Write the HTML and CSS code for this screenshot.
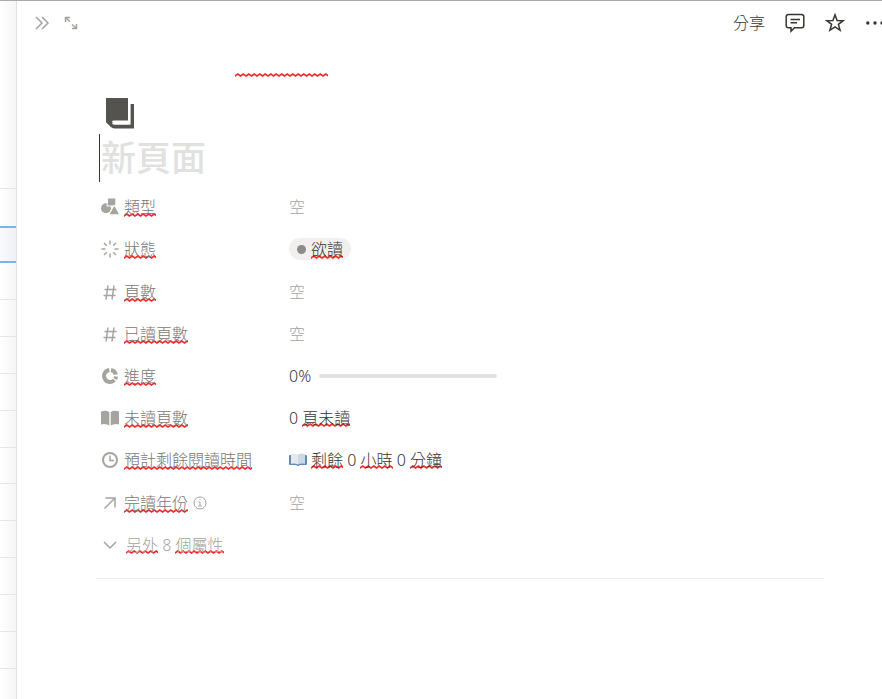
FILE: index.html
```html
<!DOCTYPE html>
<html lang="zh-Hant">
<head>
    <meta charset="UTF-8">
    <meta name="viewport" content="width=device-width, initial-scale=1.0">
    <title>新頁面</title>
    <link rel="stylesheet" href="styles.css">
</head>
<body>
    <!-- Table behind the panel -->
    <div class="backdrop">
        <div class="backdrop-head"></div>
        <div class="backdrop-row selected"></div>
        <div class="backdrop-row"></div>
        <div class="backdrop-row"></div>
        <div class="backdrop-row"></div>
        <div class="backdrop-row"></div>
        <div class="backdrop-row"></div>
        <div class="backdrop-row"></div>
        <div class="backdrop-row"></div>
        <div class="backdrop-row"></div>
        <div class="backdrop-row"></div>
        <div class="backdrop-row"></div>
        <div class="backdrop-row"></div>
    </div>

    <!-- Side panel -->
    <main class="panel">
        <header class="topbar">
            <button class="icon-button muted" aria-label="關閉">
                <svg width="16" height="16" viewBox="0 0 16 16"><path d="M2 2l6 6-6 6M8 2l6 6-6 6"/></svg>
            </button>
            <button class="icon-button muted" aria-label="展開">
                <svg width="14" height="14" viewBox="0 0 14 14"><path d="M1.500 6V1.500H6M1.500 1.500l4.500 4M8 12.500h4.500V8M12.500 12.500L8 8.500"/></svg>
            </button>
            <div class="actions">
                <button class="share">分享</button>
                <button class="icon-button" aria-label="留言">
                    <svg width="20" height="20" viewBox="0 0 20 20"><path d="M3.500 1.500h13a2.300 2.300 0 0 1 2.300 2.300v8.700a2.300 2.300 0 0 1-2.300 2.300H9.500L6 18.200v-3.400H3.500a2.300 2.300 0 0 1-2.300-2.300V3.800a2.300 2.300 0 0 1 2.300-2.300zM5.500 6.500h9.500M5.500 9.800h6.500"/></svg>
                </button>
                <button class="icon-button" aria-label="加到最愛">
                    <svg width="20" height="20" viewBox="0 0 20 20"><path d="M10 1.800l2.100 5.700 6.100.2-4.800 3.700 1.700 5.900-5.100-3.400-5.100 3.400 1.700-5.900-4.800-3.700 6.100-.2z"/></svg>
                </button>
                <button class="icon-button more" aria-label="更多">
                    <svg width="17" height="20" viewBox="0 0 17 20"><g class="solid"><circle cx="2.800" cy="10" r="1.700"/><circle cx="10" cy="10" r="1.700"/><circle cx="17" cy="10" r="1.700"/></g></svg>
                </button>
            </div>
        </header>

        <div class="stray"></div>

        <div class="content">
            <button class="page-icon" aria-label="頁面圖示">
                <svg width="28" height="31" viewBox="0 0 28 31"><g class="solid"><path d="M0 0h22v22.500H7.500a3 3 0 0 0-2.500 4L1.500 25.500Q0 24 0 22z"/><path d="M24.500 6H28v24.500H8.500Q6.500 30.500 4.500 28.800L0 24V20h4.500l2.500 5.500q.8 1.200 2 1.200h15.500z"/></g><path class="pages" d="M23.200 6v18.500H9.500q-2 0-2.500 1.800"/></svg>
            </button>
            <input class="page-title" type="text" placeholder="新頁面" aria-label="標題" spellcheck="false">

            <div class="properties">
                <div class="property">
                    <button class="name">
                        <svg width="18" height="18" viewBox="0 0 18 18"><g class="solid"><circle cx="5" cy="10.300" r="5"/><path class="cutout" d="M6.800 0H14a.8.800 0 0 1 .8.800V8H6z"/><path class="cutout" d="M13.300 7l5.500 9.800H7.800z"/></g></svg>
                        <span class="spell">類型</span>
                    </button>
                    <button class="value empty">空</button>
                </div>
                <div class="property">
                    <button class="name">
                        <svg width="18" height="18" viewBox="0 0 18 18"><path d="M9 .500v4M9 13.500v4M.500 9h4M13.500 9h4M3 3l2.800 2.800M12.200 12.200L15 15M3 15l2.800-2.800M12.200 5.800L15 3"/></svg>
                        <span class="spell">狀態</span>
                    </button>
                    <button class="value status"><i class="dot"></i><span class="spell">欲讀</span></button>
                </div>
                <div class="property">
                    <button class="name">
                        <svg width="18" height="18" viewBox="0 0 18 18"><path d="M7 2.500l-2 14M13 2.500l-2 14M3.500 6.500h12M2.500 12.500h12"/></svg>
                        <span class="spell">頁數</span>
                    </button>
                    <button class="value empty">空</button>
                </div>
                <div class="property">
                    <button class="name">
                        <svg width="18" height="18" viewBox="0 0 18 18"><path d="M7 2.500l-2 14M13 2.500l-2 14M3.500 6.500h12M2.500 12.500h12"/></svg>
                        <span class="spell">已讀頁數</span>
                    </button>
                    <button class="value empty">空</button>
                </div>
                <div class="property">
                    <button class="name" id="progress-name">
                        <svg width="18" height="18" viewBox="0 0 18 18"><path class="ring" d="M8.300 3a6 6 0 1 0 5.200 10M10 3a6 6 0 0 1 4.800 4.700M15 9.500a6 6 0 0 1-.8 2.500"/></svg>
                        <span class="spell">進度</span>
                    </button>
                    <div class="value">0%<progress class="bar" value="0" max="100" aria-labelledby="progress-name"></progress></div>
                </div>
                <div class="property">
                    <button class="name">
                        <svg width="18" height="18" viewBox="0 0 18 18"><g class="solid"><path d="M0 2.500Q4.500 1 8.300 3v13.500Q4.500 14 0 15.500z"/><path d="M18 2.500Q13.500 1 9.700 3v13.500Q13.500 14 18 15.500z"/></g></svg>
                        <span class="spell">未讀頁數</span>
                    </button>
                    <div class="value"><span>0 <span class="spell">頁未讀</span></span></div>
                </div>
                <div class="property">
                    <button class="name">
                        <svg width="18" height="18" viewBox="0 0 18 18"><circle class="thick" cx="9" cy="9" r="7"/><path d="M9 4.500V9.500h4"/></svg>
                        <span class="spell">預計剩餘閱讀時間</span>
                    </button>
                    <div class="value">
                        <svg class="open-book" width="18" height="14" viewBox="0 0 18 14"><path fill="#5b8db8" d="M1 2h16q1 0 1 1v8q0 1-1 1h-6q-2 2-4 0H1q-1 0-1-1V3q0-1 1-1z"/><path fill="#e4e9ee" d="M2 1q4-1.500 7 .8v9.700Q6 10 2 10.700z"/><path fill="#cbd8e5" d="M16 1q-4-1.500-7 .8v9.700q3-1.500 7-.8z"/></svg>
                        <span><span class="spell">剩餘</span> 0 <span class="spell">小時</span> 0 <span class="spell">分鐘</span></span>
                    </div>
                </div>
                <div class="property">
                    <button class="name">
                        <svg width="18" height="18" viewBox="0 0 18 18"><path d="M3.500 14.500L13.500 4.500M4.500 4h9.500v9.500"/></svg>
                        <span class="spell">完讀年份</span>
                        <svg class="info" width="14" height="14" viewBox="0 0 14 14"><circle cx="7" cy="7" r="6"/><path d="M5.500 6H7v4M5.200 10h3.600M6.500 3.500h1"/></svg>
                    </button>
                    <button class="value empty">空</button>
                </div>
                <div class="property">
                    <button class="name others">
                        <svg width="18" height="18" viewBox="0 0 18 18"><path d="M3 6l6 6 6-6"/></svg>
                        <span><span class="spell">另外</span> 8 <span class="spell">個屬性</span></span>
                    </button>
                </div>
            </div>
            <hr>
        </div>
    </main>
</body>
</html>
```
FILE: styles.css
```css
* {
    box-sizing: border-box;
}

body {
    margin: 0;
    min-height: 100vh;
    display: flex;
    overflow: hidden;
    border-top: 1px solid #a9a9a9;
    background-color: #fff;
    color: #37352f;
    font-family: "Noto Sans", "Noto Sans CJK TC", sans-serif;
    font-size: 16px;
    font-weight: 300;
    line-height: 24px;
}

button {
    display: flex;
    align-items: center;
    padding: 0;
    border: none;
    background: none;
    color: inherit;
    font: inherit;
    cursor: pointer;
}

svg {
    flex: none;
    fill: none;
    stroke: currentColor;
    stroke-width: 1.5;
}

.solid {
    fill: currentColor;
    stroke: none;
}

.cutout {
    stroke: #fff;
    stroke-width: 1;
}

.thick {
    stroke-width: 2;
}

.ring {
    stroke-width: 4;
}

/* Table behind the panel */
.backdrop {
    width: 16px;
    display: flex;
    flex-direction: column;
    padding-bottom: 30px;
    background: linear-gradient(to right, #fff, #f5f5f5);
}

.backdrop-head {
    height: 225px;
    background: linear-gradient(#e6e6e6, #e6e6e6) 0 187px / 100% 1px no-repeat;
}

.backdrop-row {
    flex: 1;
    box-shadow: inset 0 -1px #e6e6e6;
}

.backdrop-row.selected {
    box-shadow: inset 0 2px #7ab4e8, inset 0 -2px #7ab4e8;
    background: linear-gradient(to right, #f8fafd, #eff1f4);
}

/* Side panel */
.panel {
    flex: 1;
    min-width: 0;
    border-left: 1px solid #e2e2e2;
    background-color: #fff;
}

.topbar {
    display: flex;
    align-items: center;
    gap: 14px;
    height: 44px;
    padding-left: 17px;
}

.actions {
    display: flex;
    align-items: center;
    gap: 20px;
    margin-left: auto;
}

.muted {
    color: #a3a29e;
}

/* Wavy spelling marks */
.spell,
.stray {
    background: url("data:image/svg+xml,%3Csvg xmlns='http://www.w3.org/2000/svg' width='11' height='4'%3E%3Cpath d='M-1 2L0 3L2.750 1L5.500 3L8.250 1L11 3L12 2' fill='none' stroke='%23f02a2a' stroke-width='1.600'/%3E%3C/svg%3E") left bottom 2px / 11px 4px repeat-x;
}

.stray {
    width: 93px;
    height: 6px;
    margin: 28px 0 0 218px;
}

.content {
    padding: 19px 58px 0 79px;
}

.page-icon {
    margin-left: 10px;
    color: #55534e;
}

.pages {
    stroke: #fff;
    stroke-width: 2;
}

.page-title {
    display: block;
    width: 100%;
    height: 48px;
    margin: 5px 0 4px 3px;
    padding: 0 0 2px 1px;
    border: none;
    border-left: 1px solid #37352f;
    outline: none;
    font-family: inherit;
    font-size: 35px;
    font-weight: 500;
}

.page-title::placeholder {
    color: #e1e1e0;
}

/* Properties */
.properties {
    display: grid;
    grid-auto-rows: 1fr;
    min-height: 380px;
    padding-left: 5px;
}

.property {
    display: grid;
    grid-template-columns: 188px 1fr;
    align-items: center;
    justify-items: start;
}

.name {
    gap: 5px;
    color: #787774;
    white-space: nowrap;
}

.name svg {
    color: #a5a49f;
}

.name .info {
    stroke-width: 1;
}

.value {
    display: flex;
    align-items: center;
}

.empty {
    color: #a5a49f;
}

.status {
    gap: 5px;
    height: 22px;
    padding: 0 8px;
    border-radius: 11px;
    background-color: #f1f0ef;
}

.dot {
    width: 9px;
    height: 9px;
    border-radius: 50%;
    background-color: #8e8c88;
}

.bar {
    width: 178px;
    height: 4px;
    margin-left: 8px;
    appearance: none;
    border: none;
    border-radius: 2px;
    overflow: hidden;
    background-color: #e3e2e0;
}

.bar::-webkit-progress-bar {
    background-color: #e3e2e0;
}

.bar::-webkit-progress-value {
    background-color: #787774;
}

.open-book {
    margin-right: 4px;
    stroke: none;
}

.others {
    gap: 7px;
    color: #a5a49f;
}

hr {
    margin: 12px 0 0;
    border: none;
    border-top: 1px solid #ebebea;
}
```
